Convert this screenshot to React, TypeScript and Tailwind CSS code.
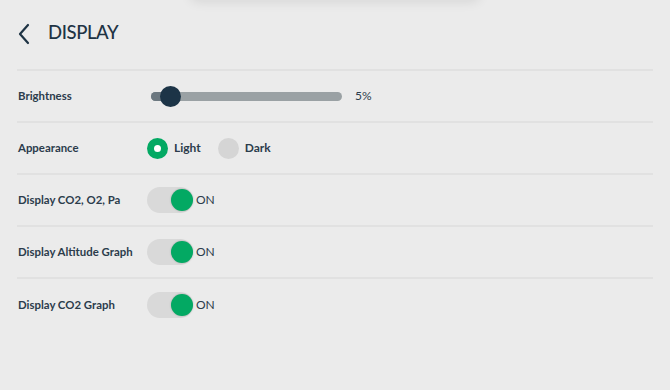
import React from "react";

function Row({ label, children, last }: { label: string; children: React.ReactNode; last?: boolean }) {
  return (
    <div className={`flex items-center h-[52px] ${last ? "" : "border-b-2 border-[#e1e1e1]"}`}>
      <div className="w-[130px] pl-[1px] text-[11.4px] font-bold text-[#2c3c4b]">{label}</div>
      <div className="flex items-center">{children}</div>
    </div>
  );
}

function Toggle() {
  return (
    <div className="flex items-center">
      <div className="relative w-[46px] h-[26px] rounded-full bg-[#d9d9d9]">
        <div className="absolute right-0 top-[2px] w-[22px] h-[22px] rounded-full bg-[#03a963] shadow-[0_0_2px_rgba(0,0,0,0.25)]" />
      </div>
      <span className="ml-[3px] text-[12px] text-[#2c3c4b]">ON</span>
    </div>
  );
}

export default function App() {
  return (
    <div
      className="relative w-[670px] h-[390px] bg-[#ebebeb] overflow-hidden"
      style={{ fontFamily: "Lato, 'Open Sans', sans-serif" }}
    >
      <div className="absolute left-[190px] top-[-40px] w-[290px] h-[40px] rounded-lg bg-[#ebebeb] shadow-[0_2px_12px_rgba(0,0,0,0.09)]" />
      <div className="flex items-center h-[69px] pl-[17px]">
        <svg width="14" height="22" viewBox="0 0 14 22" fill="none" className="mt-[-2px]">
          <path d="M11 2 L3 11 L11 20" stroke="#1e3344" strokeWidth="2.2" strokeLinecap="round" strokeLinejoin="round" />
        </svg>
        <span className="ml-[17px] mt-[-3px] text-[18.5px] font-medium text-[#1e3344] tracking-[-0.4px]">DISPLAY</span>
      </div>
      <div className="mx-[17px] border-t-2 border-[#e1e1e1]">
        <Row label="Brightness">
          <div className="relative w-[191px] h-[9px] ml-[4px] rounded-full bg-[#9aa1a4]">
            <div className="absolute left-0 top-0 h-[9px] w-[20px] rounded-l-full bg-[#6c7880]" />
            <div className="absolute left-[9px] top-[-6px] w-[21px] h-[21px] rounded-full bg-[#1c3447]" />
          </div>
          <span className="ml-[13px] text-[12px] text-[#2c3c4b]">5%</span>
        </Row>
        <Row label="Appearance">
          <div className="flex items-center">
            <div className="w-[21px] h-[21px] rounded-full bg-[#03a963] flex items-center justify-center">
              <div className="w-[7px] h-[7px] rounded-full bg-white" />
            </div>
            <span className="ml-[6px] text-[12px] font-bold text-[#2c3c4b]">Light</span>
            <div className="ml-[17px] w-[21px] h-[21px] rounded-full bg-[#d5d5d5]" />
            <span className="ml-[6px] text-[12px] font-bold text-[#2c3c4b]">Dark</span>
          </div>
        </Row>
        <Row label="Display CO2, O2, Pa">
          <Toggle />
        </Row>
        <Row label="Display Altitude Graph">
          <Toggle />
        </Row>
        <Row label="Display CO2 Graph" last>
          <Toggle />
        </Row>
      </div>
    </div>
  );
}
